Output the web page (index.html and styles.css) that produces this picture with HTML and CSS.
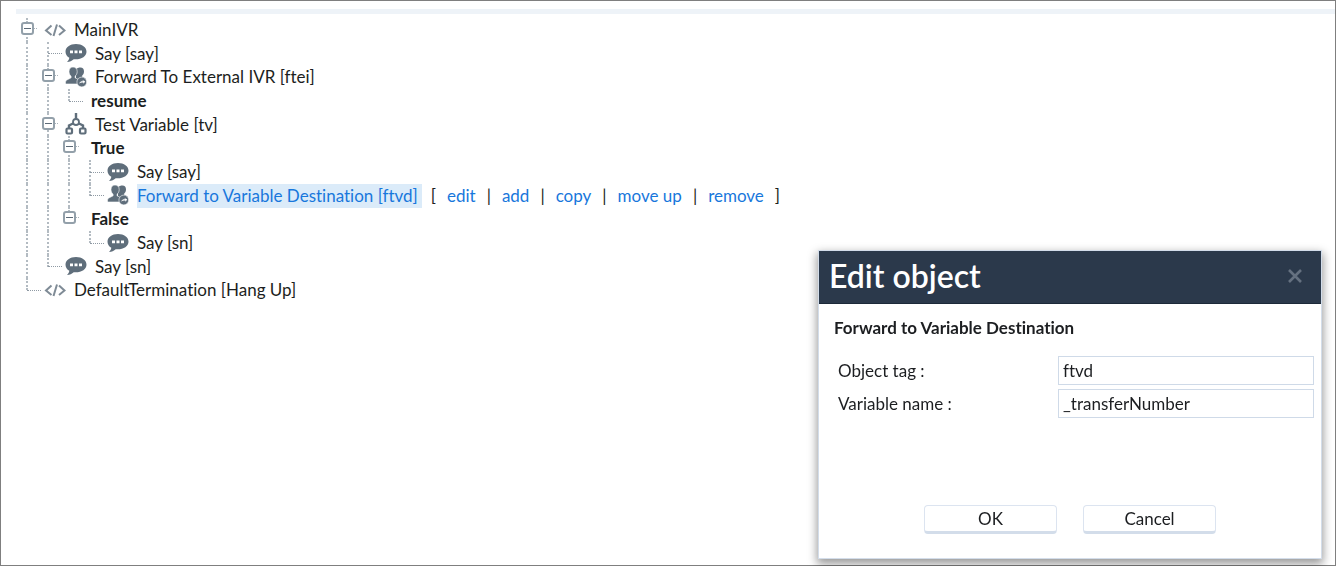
FILE: index.html
```html
<!DOCTYPE html>
<html lang="en">
<head>
<meta charset="utf-8">
<title>MainIVR</title>
<link rel="stylesheet" href="styles.css">
</head>
<body>
<svg class="sprite" aria-hidden="true">
  <symbol id="code" viewBox="0 0 22 22">
    <path d="M7.500 6.500 2 11.500 7.500 16M15 6.500 20.500 11.500 15 16M13 5.500 9.500 17" fill="none" stroke="currentColor" stroke-width="2"/>
  </symbol>
  <symbol id="say" viewBox="0 0 22 22">
    <path d="M11 2C5 2 .5 5.200.500 9.700c0 2.600 1.500 4.700 3.800 6-.2 1.700-1 3-2.300 4.300 2.800-.2 5-1.300 6.700-2.800 7 .8 12.800-2.600 12.800-7.500C21.500 5.200 17 2 11 2z" fill="currentColor"/>
    <path d="M5 8.500h3v2.800H5zM9.500 8.500h3v2.800h-3zM14 8.500h3v2.800h-3z" fill="#fff"/>
  </symbol>
  <symbol id="forward" viewBox="0 0 22 22">
    <path d="M15.500 1.500c2.200 0 3.500 1.500 3.500 4 0 1.800-.8 3.300-1.800 4v1.300l3.300 1.700v3H11V2.900c1-.7 2.800-1.400 4.500-1.400z" fill="currentColor"/>
    <path d="M8 1c2.700 0 4.200 1.800 4.200 4.600 0 2-.9 3.700-2.100 4.600v1.600l4.400 2.200c.7.400 1 1.200 1 2.500V18H.5v-1.500c0-1.300.4-2.100 1.300-2.500l4.300-2.200v-1.600C4.800 9.300 4 7.600 4 5.600 4 2.800 5.400 1 8 1z" fill="currentColor" stroke="#fff" stroke-width=".6"/>
    <circle cx="16.800" cy="16" r="4.900" fill="currentColor" stroke="#fff" stroke-width=".6"/>
    <path d="M14 17.500c1-2 2.500-2.500 4-2.300l-.5-1.200 2.700 1.500-1.700 2.300-.2-1.300c-1.500-.2-2.800.1-4.300 1z" fill="#fff"/>
  </symbol>
  <symbol id="test" viewBox="0 0 22 22">
    <path d="M11 0v6M9 10 4 12.500V16M13 10l5 2.500V16" fill="none" stroke="currentColor" stroke-width="2.400"/>
    <circle cx="11" cy="9" r="3" fill="#fff" stroke="currentColor" stroke-width="1.800"/>
    <rect x="1.500" y="15.500" width="5.500" height="5" rx="1" fill="#fff" stroke="currentColor" stroke-width="2.200"/>
    <rect x="15" y="15.500" width="5.500" height="5" rx="1" fill="#fff" stroke="currentColor" stroke-width="2.200"/>
  </symbol>
</svg>

<main class="page">
  <ul class="tree">
    <li class="row"><button class="guide toggle" aria-label="Collapse MainIVR"></button><svg class="icon light"><use href="#code"/></svg><span class="label">MainIVR</span></li>
    <li class="row"><i class="guide line"></i><i class="guide line branch"></i><svg class="icon"><use href="#say"/></svg><span class="label">Say [say]</span></li>
    <li class="row"><i class="guide line"></i><button class="guide toggle" aria-label="Collapse ftei"></button><svg class="icon"><use href="#forward"/></svg><span class="label">Forward To External IVR [ftei]</span></li>
    <li class="row"><i class="guide line"></i><i class="guide line"></i><i class="guide line branch last"></i><b class="case">resume</b></li>
    <li class="row"><i class="guide line"></i><button class="guide toggle" aria-label="Collapse tv"></button><svg class="icon"><use href="#test"/></svg><span class="label">Test Variable [tv]</span></li>
    <li class="row"><i class="guide line"></i><i class="guide line"></i><button class="guide toggle" aria-label="Collapse True"></button><b class="case">True</b></li>
    <li class="row"><i class="guide line"></i><i class="guide line"></i><i class="guide line"></i><i class="guide line branch"></i><svg class="icon"><use href="#say"/></svg><span class="label">Say [say]</span></li>
    <li class="row"><i class="guide line"></i><i class="guide line"></i><i class="guide line"></i><i class="guide line branch last"></i><svg class="icon"><use href="#forward"/></svg><a class="label selected" href="#ftvd">Forward to Variable Destination [ftvd]</a>
      <span class="actions"><span>[</span><a href="#edit">edit</a><span>|</span><a href="#add">add</a><span>|</span><a href="#copy">copy</a><span>|</span><a href="#up">move up</a><span>|</span><a href="#remove">remove</a><span>]</span></span></li>
    <li class="row"><i class="guide line"></i><i class="guide line"></i><button class="guide toggle last" aria-label="Collapse False"></button><b class="case">False</b></li>
    <li class="row"><i class="guide line"></i><i class="guide line"></i><i class="guide"></i><i class="guide line branch last"></i><svg class="icon"><use href="#say"/></svg><span class="label">Say [sn]</span></li>
    <li class="row"><i class="guide line"></i><i class="guide line branch last"></i><svg class="icon"><use href="#say"/></svg><span class="label">Say [sn]</span></li>
    <li class="row"><i class="guide line branch last"></i><svg class="icon light"><use href="#code"/></svg><span class="label">DefaultTermination [Hang Up]</span></li>
  </ul>
</main>

<section class="dialog" role="dialog" aria-labelledby="dialog-title">
  <header class="dialog-head">
    <h1 id="dialog-title">Edit object</h1>
    <button class="close" aria-label="Close"><svg viewBox="0 0 14 14"><path d="M1 1l12 12M13 1 1 13" stroke="currentColor" stroke-width="2.600"/></svg></button>
  </header>
  <form class="dialog-body">
    <h2>Forward to Variable Destination</h2>
    <div class="fields">
      <label for="tag">Object tag :</label><input id="tag" type="text" value="ftvd">
      <label for="variable">Variable name :</label><input id="variable" type="text" value="_transferNumber">
    </div>
    <div class="buttons"><button type="button">OK</button><button type="button">Cancel</button></div>
  </form>
</section>
</body>
</html>
```
FILE: styles.css
```css
*, *::before, *::after { box-sizing: border-box; }

body {
  margin: 0;
  min-height: 100vh;
  border: 1px solid #7f7f7f;
  background: #fff;
  color: #1c1e21;
  font: 17px/24px Lato, "Noto Sans", sans-serif;
  font-variant-ligatures: none;
}

button, input { font: inherit; color: inherit; }
a { color: #1877dc; text-decoration: none; }

.sprite { position: absolute; width: 0; height: 0; }

.page {
  margin: 8px 0 0 15px;
  border-top: 5px solid #eef3f8;
}

/* Tree */
.tree {
  display: grid;
  grid-auto-rows: 1fr;
  height: 288px;
  margin: 0;
  padding: 4px 0 0 1px;
  list-style: none;
}

.row { display: flex; align-items: center; min-height: 0; white-space: nowrap; }

.guide {
  position: relative;
  flex: none;
  align-self: stretch;
  width: 21px;
  padding: 0;
  border: 0;
  background: none;
}

.line::before, .toggle::before {
  content: "";
  position: absolute;
  top: 0;
  bottom: 0;
  left: 9px;
  border-left: 2px dotted #b3bbc2;
}

.last::before { bottom: 50%; }

.branch::after {
  content: "";
  position: absolute;
  top: 50%;
  left: 10px;
  width: 14px;
  border-top: 1px dotted #8f9aa4;
}

.toggle {
  background: repeating-linear-gradient(90deg, #a9b2ba 0 1px, transparent 1px 2px) right 10px / 4px 1px no-repeat;
  cursor: pointer;
}

.toggle::after {
  content: "";
  position: absolute;
  top: 4px;
  left: 4px;
  width: 13px;
  height: 13px;
  border: 2px solid #93a0aa;
  border-radius: 3px;
  background: linear-gradient(#5d6b78, #5d6b78) center / 7px 1px no-repeat #fff;
}

.icon { flex: none; width: 22px; height: 22px; margin: 0 8px 0 6px; color: #5f6e7b; }
.icon.light { color: #7f8b96; }
.case { margin-left: 11px; }
.selected { padding-right: 4px; background: #dbebf9; }

.actions { display: flex; gap: 11px; margin-left: 9px; }

/* Dialog */
.dialog {
  position: fixed;
  right: 14px;
  bottom: 7px;
  width: 504px;
  border: 1px solid #d3ddea;
  background: #fff;
  box-shadow: 0 4px 9px 1px rgba(0, 0, 0, .4);
}

.dialog-head {
  display: flex;
  align-items: center;
  justify-content: space-between;
  padding: 5px 19px 7px 10px;
  border-bottom: 1px solid #1c2939;
  background: #2b394b;
  color: #fff;
}

.dialog-head h1 { margin: 0; font-size: 32px; line-height: 40px; font-weight: 600; }

.close { width: 14px; height: 14px; padding: 0; border: 0; background: none; color: #657180; }
.close svg { display: block; }

.dialog-body { padding: 12px 7px 24px 15px; }
.dialog-body h2 { margin: 0; font-size: 17px; line-height: 24px; }

.fields {
  display: grid;
  grid-template-columns: 220px 1fr;
  gap: 4px 0;
  align-items: center;
  margin: 16px 0 87px 4px;
}

.fields input {
  width: 100%;
  height: 29px;
  padding: 0 4px;
  border: 1px solid #cfdae8;
  background: #fff;
}

.buttons { display: flex; justify-content: center; gap: 26px; padding-right: 8px; }

.buttons button {
  width: 133px;
  height: 29px;
  padding: 0;
  border: 1px solid #dce4f0;
  border-bottom: 3px solid #d3ddea;
  border-radius: 4px;
  background: #fff;
}
```
